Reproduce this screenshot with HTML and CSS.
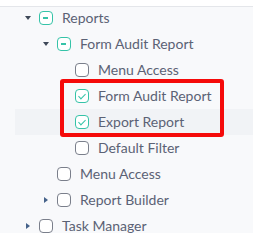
FILE: index.html
```html
<!DOCTYPE html>
<html>
<head>
<meta charset="utf-8">
<link rel="stylesheet" href="styles.css">
</head>
<body>
<div class="topbar"></div>
<div class="panel">
  <ul class="tree">
    <li class="row lvl1"><span class="caret down"></span><span class="cb partial"></span><span class="label">Reports</span></li>
    <li class="row lvl2"><span class="caret down"></span><span class="cb partial"></span><span class="label">Form Audit Report</span></li>
    <li class="row lvl3"><span class="caret"></span><span class="cb"></span><span class="label">Menu Access</span></li>
    <li class="row lvl3"><span class="caret"></span><span class="cb checked"></span><span class="label">Form Audit Report</span></li>
    <li class="row lvl3 hover"><span class="caret"></span><span class="cb checked"></span><span class="label">Export Report</span></li>
    <li class="row lvl3"><span class="caret"></span><span class="cb"></span><span class="label">Default Filter</span></li>
    <li class="row lvl2"><span class="caret"></span><span class="cb"></span><span class="label">Menu Access</span></li>
    <li class="row lvl2"><span class="caret right"></span><span class="cb"></span><span class="label">Report Builder</span></li>
    <li class="row lvl1"><span class="caret right"></span><span class="cb"></span><span class="label">Task Manager</span></li>
  </ul>
  <div class="highlight-box"></div>
</div>
</body>
</html>
```
FILE: styles.css
```css
html, body {
  margin: 0;
  padding: 0;
  background: #ffffff;
}
body {
  width: 253px;
  height: 249px;
  overflow: hidden;
  font-family: Lato, "Open Sans", sans-serif;
}
.topbar {
  height: 6px;
  border-bottom: 1px solid #e4e6ea;
  background: #ffffff;
}
.panel {
  position: relative;
  height: 226px;
  overflow: hidden;
  background: #f8f9fb;
}
.tree {
  list-style: none;
  margin: -2px 0 0 0;
  padding: 0;
}
.row {
  height: 26px;
  display: flex;
  align-items: center;
  font-size: 14px;
  color: #5b6275;
  white-space: nowrap;
}
.row.hover {
  margin-left: 15px;
  background: #f1f3f6;
}
.row.hover .caret { margin-left: -15px; }
.lvl1 { padding-left: 21px; }
.lvl2 { padding-left: 39px; }
.lvl3 { padding-left: 57px; }
.row.hover.lvl3 { padding-left: 57px; }
.caret {
  width: 14px;
  height: 14px;
  margin-right: 4px;
  display: flex;
  align-items: center;
  justify-content: center;
  flex: none;
}
.caret.down::before {
  content: "";
  border-left: 3px solid transparent;
  border-right: 3px solid transparent;
  border-top: 4px solid #3e4858;
  margin-left: -1px;
}
.caret.right::before {
  content: "";
  border-top: 3px solid transparent;
  border-bottom: 3px solid transparent;
  border-left: 4px solid #45628a;
  margin-left: -1px;
}
.cb {
  width: 14px;
  height: 14px;
  box-sizing: border-box;
  border: 1.5px solid #7a7f8b;
  border-radius: 4px;
  background: #ffffff;
  flex: none;
  position: relative;
  margin-right: 9px;
}
.cb.partial, .cb.checked {
  border-color: #35c3a8;
}
.cb.partial::after {
  content: "";
  position: absolute;
  left: 3px;
  top: 4.5px;
  width: 5px;
  height: 2px;
  background: #35c3a8;
}
.cb.checked::after {
  content: "";
  position: absolute;
  left: 3.5px;
  top: 1.5px;
  width: 3px;
  height: 6px;
  border-right: 1.3px solid #35c3a8;
  border-bottom: 1.3px solid #35c3a8;
  transform: rotate(45deg);
}
.label {
  line-height: 14px;
}
.highlight-box {
  position: absolute;
  left: 60px;
  top: 72px;
  width: 164px;
  height: 58px;
  box-sizing: border-box;
  border: 4px solid #f50a0a;
  border-radius: 3px;
}
```
